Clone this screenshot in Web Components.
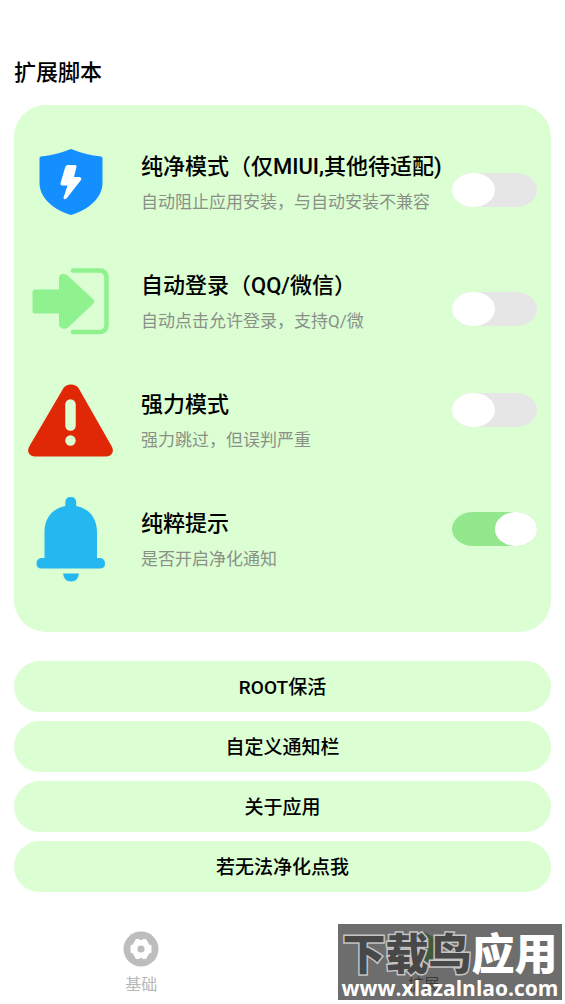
<!DOCTYPE html>
<html lang="zh-CN">
<head>
<meta charset="utf-8">
<meta name="viewport" content="width=device-width, initial-scale=1">
<title>扩展脚本</title>
<style>
html { height: 100%; }
body { margin: 0; min-height: 100%; display: flex; background: #fff; color: #000; font-family: Roboto, "Noto Sans CJK SC", sans-serif; }
ext-page { flex: 1; min-width: 0; }
</style>
</head>
<body>
<ext-page></ext-page>

<template id="page">
<style>
:host { display: flex; flex-direction: column; position: relative; }
main { flex: 1; padding: 57px 14px 0; }
h1 { margin: 0 0 16px; font-size: 22px; line-height: 32px; font-weight: 500; }
.card { background: #dbfed3; border-radius: 32px; padding: 18px 14px 33px; }
.actions { display: grid; gap: 9px; margin-top: 29px; }
site-mark { position: absolute; right: 3px; bottom: 4px; }
</style>
<main>
<h1>扩展脚本</h1>
<div class="card">
<script-row heading="纯净模式（仅MIUI,其他待适配)" note="自动阻止应用安装，与自动安装不兼容" low>
<svg viewBox="0 0 85 85" width="85" height="85" aria-hidden="true"><path fill="#138fff" d="M43 9Q58 15 73 16.500Q74.500 16.700 74.500 18.500V43C74.500 58 60 70 43 75C26 70 11.500 58 11.500 43V18.500Q11.500 16.700 13 16.500Q28 15 43 9Z"/><path fill="#fff" d="M40 25H46.500Q49 25 48.400 27.300L46 37H51.500Q54 37.500 53 40L38.500 58.500Q35.500 60.500 35.500 57.500L39.500 45.500H34Q32 45 32.500 43L37.200 27.300Q38 25 40 25Z"/></svg>
</script-row>
<script-row heading="自动登录（QQ/微信）" note="自动点击允许登录，支持Q/微" low>
<svg viewBox="0 0 85 85" width="85" height="85" aria-hidden="true"><path fill="#90f28f" d="M7 30.500H31V19Q31 16 34 15Q36.500 14.500 39 16L65 40Q67.500 42.500 65 45L40 68.500Q37 70.500 34 69.200Q31 68 31 65V54.500H7Q4.500 54.500 4.500 52V33Q4.500 30.500 7 30.500Z"/><path fill="none" stroke="#90f28f" stroke-width="4.500" stroke-linecap="round" d="M45 11.500H71Q78.500 11.500 78.500 19V65.500Q78.500 73 71 73H45"/></svg>
</script-row>
<script-row heading="强力模式" note="强力跳过，但误判严重">
<svg viewBox="0 0 85 85" width="85" height="85" aria-hidden="true"><path fill="#e12806" d="M35.500 10Q38 6.500 43 6.500Q48 6.500 50.500 10L83.500 68Q86 72 84 75.500Q82 78.500 78 78.500H7Q3 78.500 1 75.500Q-1 72 1.500 68Z"/><path stroke="#dbfed3" stroke-width="10.500" stroke-linecap="round" d="M42.500 26.500V47.500"/><circle cx="42.500" cy="62.500" r="5.200" fill="#dbfed3"/></svg>
</script-row>
<script-row heading="纯粹提示" note="是否开启净化通知" on>
<svg viewBox="0 0 85 85" width="85" height="85" aria-hidden="true"><path fill="#25b7f0" d="M37.300 9V5.500Q37.300 0 42.700 0Q48.200 0 48.200 5.500V9C61 11.500 69 21 69 35V61H72Q77 61.500 77 66.500Q77 71.500 72 71.500H13.500Q8.500 71.500 8.500 66.500Q8.500 61.500 13.500 61H16.500V35C16.500 21 24.500 11.500 37.300 9ZM35 76.500H51Q50 84.500 43 84.500Q36 84.500 35 76.500Z"/></svg>
</script-row>
</div>
<div class="actions">
<pill-button>ROOT保活</pill-button>
<pill-button>自定义通知栏</pill-button>
<pill-button>关于应用</pill-button>
<pill-button>若无法净化点我</pill-button>
</div>
</main>
<tab-bar></tab-bar>
<site-mark></site-mark>
</template>

<template id="row">
<style>
:host { display: flex; height: 119px; align-items: center; }
.icon { flex: none; width: 85px; height: 85px; }
label { flex: 1; min-width: 0; margin-left: 28px; white-space: nowrap; }
strong { display: block; font-size: 22px; line-height: 32px; font-weight: 500; }
small { display: block; margin-top: 6px; font-size: 17px; line-height: 26px; color: #8a9088; font-weight: 400; }
input { appearance: none; flex: none; align-self: flex-start; width: 85px; height: 34px; margin: 32px 0 0; border-radius: 21px / 17px; background: #e6e6e6; }
:host([low]) input { margin-top: 50px; }
input::before { content: ""; display: block; width: 50%; height: 100%; border-radius: 50%; background: #fff; }
input:checked { background: #93e88d; }
input:checked::before { margin-left: auto; }
</style>
<div class="icon"><slot></slot></div>
<label for="toggle"><strong></strong><small></small></label>
<input type="checkbox" role="switch" id="toggle">
</template>

<template id="pill">
<style>
:host { display: block; }
button { display: block; width: 100%; height: 51px; padding: 2px 0 0; border: 0; border-radius: 26px; background: #dbfed3; color: #000; font: 500 19px/28px Roboto, "Noto Sans CJK SC", sans-serif; }
</style>
<button type="button"><slot></slot></button>
</template>

<template id="tabs">
<style>
:host { display: block; }
nav { display: grid; grid-template-columns: 1fr 1fr; padding-bottom: 7px; }
a { display: flex; flex-direction: column; align-items: center; gap: 6px; color: #b9b9b9; text-decoration: none; font-size: 16px; line-height: 24px; font-weight: 400; }
a[aria-current] { color: #000; }
svg { display: block; }
</style>
<nav>
<a href="#basic"><svg viewBox="0 0 36 36" width="36" height="36" aria-hidden="true"><circle cx="18" cy="18" r="17.500" fill="#bdbdbd"/><path fill="#fff" stroke="#fff" stroke-width="2" stroke-linejoin="round" d="M13.500 9H15.500Q18 11.500 20.500 9H22.500L24.500 12.500Q24.500 14.500 27.500 15V21Q24.500 21.500 24.500 23.500L22.500 27H20.500Q18 24.500 15.500 27H13.500L11.500 23.500Q11.500 21.500 8.500 21V15Q11.500 14.500 11.500 12.500Z"/><circle cx="18" cy="18" r="3.600" fill="#bdbdbd"/></svg>基础</a>
<a href="#extend" aria-current="page"><svg viewBox="0 0 36 36" width="36" height="36" aria-hidden="true"><path fill="#0aa526" d="M18 1L31 8V25L18 33L5 25V8Z"/></svg>扩展</a>
</nav>
</template>

<template id="mark">
<style>
:host { display: flex; flex-direction: column; align-items: center; width: 224px; height: 76px; background: rgba(72,72,72,.8); color: #fff; white-space: nowrap; }
.name { font: 900 43px/54px "Noto Sans CJK SC", sans-serif; }
.dark { color: #484848; -webkit-text-stroke: 3px #c4c4c4; paint-order: stroke fill; }
.url { font: 700 21px/20px "Open Sans", sans-serif; }
</style>
<div class="name"><span class="dark">下载鸟</span><span class="white">应用</span></div>
<div class="url">www.xlazalnlao.com</div>
</template>

<script>
class Base extends HTMLElement {
  constructor() {
    super();
    this.attachShadow({ mode: "open" }).append(document.getElementById(this.constructor.source).content.cloneNode(true));
  }
}
class ScriptRow extends Base {
  static source = "row";
  connectedCallback() {
    this.shadowRoot.querySelector("strong").textContent = this.getAttribute("heading");
    this.shadowRoot.querySelector("small").textContent = this.getAttribute("note");
    this.shadowRoot.querySelector("input").checked = this.hasAttribute("on");
  }
}
customElements.define("script-row", ScriptRow);
customElements.define("pill-button", class extends Base { static source = "pill"; });
customElements.define("tab-bar", class extends Base { static source = "tabs"; });
customElements.define("site-mark", class extends Base { static source = "mark"; });
customElements.define("ext-page", class extends Base { static source = "page"; });
</script>
</body>
</html>
